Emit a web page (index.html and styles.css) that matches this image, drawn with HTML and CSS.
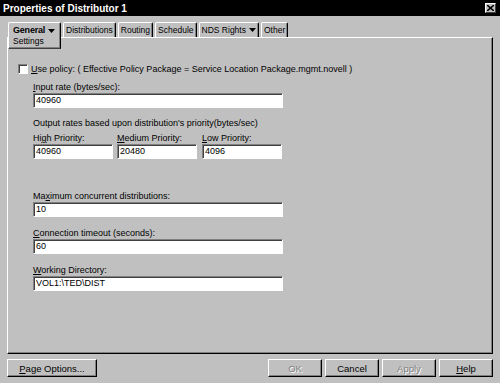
FILE: index.html
```html
<!DOCTYPE html>
<html>
<head>
    <title>Properties of Distributor 1</title>
    <link rel="stylesheet" href="styles.css">
</head>
<body>
    <div class="window">
        <div class="titlebar">
            <span>Properties of Distributor 1</span>
            <span class="close">
                <svg width="7" height="6" viewBox="0 0 7 6"><path d="M0 0 L7 6 M7 0 L0 6" stroke="#000" stroke-width="1.6"/></svg>
            </span>
        </div>

        <div class="tabs">
            <div class="tab tab-active">
                <div class="tab-head"><b>General</b> <svg width="7" height="4" viewBox="0 0 7 4"><path d="M0 0 H7 L3.5 4 Z" fill="#000"/></svg></div>
                <div>Settings</div>
            </div>
            <div class="tab">Distributions</div>
            <div class="tab">Routing</div>
            <div class="tab">Schedule</div>
            <div class="tab">NDS Rights <svg width="7" height="4" viewBox="0 0 7 4"><path d="M0 0 H7 L3.5 4 Z" fill="#000"/></svg></div>
            <div class="tab">Other</div>
        </div>

        <div class="panel">
            <div class="policy">
                <span class="checkbox"></span>
                <span><u>U</u>se policy: ( Effective Policy Package = Service Location Package.mgmt.novell )</span>
            </div>

            <div class="label first"><u>I</u>nput rate (bytes/sec):</div>
            <div class="field">40960</div>

            <div class="label output">Output rates based upon distribution's priority(bytes/sec)</div>
            <div class="priorities">
                <div>
                    <div class="label">Hi<u>g</u>h Priority:</div>
                    <div class="field small">40960</div>
                </div>
                <div>
                    <div class="label"><u>M</u>edium Priority:</div>
                    <div class="field small">20480</div>
                </div>
                <div>
                    <div class="label"><u>L</u>ow Priority:</div>
                    <div class="field small">4096</div>
                </div>
            </div>

            <div class="label max">Ma<u>x</u>imum concurrent distributions:</div>
            <div class="field">10</div>

            <div class="label group"><u>C</u>onnection timeout (seconds):</div>
            <div class="field">60</div>

            <div class="label group"><u>W</u>orking Directory:</div>
            <div class="field">VOL1:\TED\DIST</div>
        </div>

        <div class="buttons">
            <div class="btn wide"><u>P</u>age Options...</div>
            <div class="btn-group">
                <div class="btn disabled">OK</div>
                <div class="btn">Cancel</div>
                <div class="btn disabled">Apply</div>
                <div class="btn"><u>H</u>elp</div>
            </div>
        </div>
    </div>
</body>
</html>
```

FILE: styles.css
```css
body {
    margin: 0;
    background-color: #c0c0c0;
    font-family: 'Liberation Sans', Arial, sans-serif;
    font-size: 9px;
    color: #000;
}

.window {
    width: 500px;
    height: 383px;
    box-sizing: border-box;
    background-color: #c0c0c0;
    overflow: hidden;
}

.titlebar {
    height: 16px;
    background-color: #000;
    color: #fff;
    font-weight: bold;
    font-size: 10px;
    display: flex;
    align-items: center;
    justify-content: space-between;
    padding: 0 4px 0 3px;
}

.close {
    width: 11px;
    height: 10px;
    box-sizing: border-box;
    background-color: #c0c0c0;
    border: 1px solid;
    border-color: #fff #404040 #404040 #fff;
    display: flex;
    align-items: center;
    justify-content: center;
}

.tabs {
    display: flex;
    height: 15px;
    margin-top: 6px;
    padding-left: 8px;
    gap: 2px;
    font-size: 8.5px;
}

.tab {
    height: 15px;
    box-sizing: border-box;
    padding: 0 2px;
    border: 1px solid;
    border-bottom: none;
    border-color: #fff #000 #000 #fff;
    border-radius: 2px 2px 0 0;
    box-shadow: inset -1px 0 #808080;
    display: flex;
    align-items: center;
    gap: 3px;
    background-color: #c0c0c0;
}

.tab-active {
    position: relative;
    z-index: 1;
    width: 53px;
    height: 27px;
    flex-direction: column;
    align-items: flex-start;
    justify-content: flex-start;
    gap: 0;
    padding: 2px 3px 0 4px;
    border-bottom: 1px solid #404040;
    box-shadow: inset -1px -1px #808080;
    line-height: 11px;
    flex-shrink: 0;
}

.tab-head {
    display: flex;
    align-items: center;
    gap: 3px;
}

.tab-head b {
    font-size: 9px;
    letter-spacing: -0.2px;
}

.panel {
    height: 317px;
    box-sizing: border-box;
    margin: 0 7px;
    border: 1px solid;
    border-color: #fff #000 #000 #fff;
    box-shadow: inset -1px -1px #808080;
    padding: 26px 0 0 25px;
}

.policy {
    display: flex;
    align-items: center;
    height: 10px;
    line-height: 10px;
    margin-left: -15px;
    gap: 3px;
}

.checkbox {
    width: 10px;
    height: 10px;
    box-sizing: border-box;
    background-color: #fff;
    border: 1px solid;
    border-color: #808080 #fff #fff #808080;
    box-shadow: inset 1px 1px #404040;
}

.label {
    line-height: 10px;
    height: 10px;
    margin-bottom: 1px;
    white-space: nowrap;
}

.label.first {
    margin-top: 8px;
}

.label.output {
    margin-top: 10px;
    margin-bottom: 5px;
}

.label.max {
    margin-top: 32px;
}

.label.group {
    margin-top: 11px;
}

.field {
    width: 250px;
    height: 15px;
    box-sizing: border-box;
    background-color: #fff;
    border: 1px solid;
    border-color: #808080 #fff #fff #808080;
    box-shadow: inset 1px 1px #404040;
    padding-left: 2px;
    line-height: 13px;
}

.field.small {
    width: 80px;
}

.priorities {
    display: grid;
    grid-template-columns: 84px 85px 80px;
}

.buttons {
    display: flex;
    justify-content: space-between;
    margin-top: 5px;
    padding: 0 7px;
}

.btn-group {
    display: flex;
    gap: 3px;
}

.btn {
    width: 54px;
    height: 18px;
    box-sizing: border-box;
    border: 1px solid;
    border-color: #fff #000 #000 #fff;
    box-shadow: inset -1px -1px #808080;
    display: flex;
    align-items: center;
    justify-content: center;
    font-size: 9.5px;
}

.btn.wide {
    width: 90px;
}

.btn.disabled {
    color: #808080;
    text-shadow: 1px 1px #fff;
}
```
